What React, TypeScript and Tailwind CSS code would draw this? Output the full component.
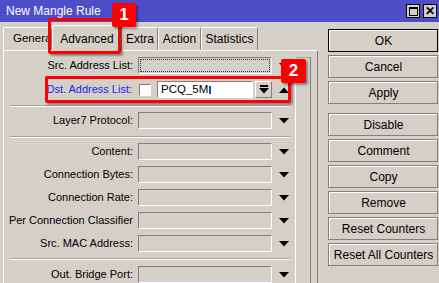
import React from "react";

const Down = ({ className = "" }: { className?: string }) => (
  <svg width="10" height="6" viewBox="0 0 10 6" className={className}>
    <polygon points="0,0 10,0 5,5.5" fill="#000" />
  </svg>
);

const Up = () => (
  <svg width="10" height="6" viewBox="0 0 10 6">
    <polygon points="0,6 10,6 5,0.5" fill="#000" />
  </svg>
);

const Field = ({ focus = false }: { focus?: boolean }) => (
  <div className="w-[134px] h-[17px] border-t border-l border-[#808080] border-b-white border-r-white border-b border-r bg-[#d4d0c8] p-[1px]">
    {focus && <div className="w-full h-full border border-dotted border-[#333]" />}
  </div>
);

const Row = ({
  label,
  mt,
  focus = false,
}: {
  label: string;
  mt: string;
  focus?: boolean;
}) => (
  <div className={`flex items-center h-[17px] ${mt}`}>
    <div className="w-[130px] text-right pr-[1px] whitespace-nowrap">{label}</div>
    <div className="ml-[4px]">
      <Field focus={focus} />
    </div>
    <div className="w-[23px] flex justify-center">
      <Down />
    </div>
  </div>
);

const Sep = ({ mt }: { mt: string }) => (
  <div className={`ml-[6px] w-[280px] h-[2px] border-t border-[#a0a0a0] border-b border-b-white ${mt}`} />
);

const Btn = ({ label, def = false, mt = "" }: { label: string; def?: boolean; mt?: string }) => (
  <div
    className={`h-[23px] flex items-center justify-center ${mt} ${
      def ? "border border-black" : "border border-[#808080]"
    }`}
  >
    <div className="w-full h-full flex items-center justify-center border-t border-l border-white text-[12px]">
      {label}
    </div>
  </div>
);

export default function App() {
  return (
    <div className="w-[439px] h-[283px] overflow-hidden bg-[#d4d0c8] relative font-['Liberation_Sans',sans-serif] text-[11px] text-black">
      {/* title bar */}
      <div className="h-[22px] bg-[#4b4ec7] flex items-center justify-between pl-[6px] pr-[2px]">
        <span className="text-white text-[12px]">New Mangle Rule</span>
        <div className="flex gap-[3px]">
          <div className="w-[14px] h-[14px] bg-[#d4d0c8] border border-black flex items-center justify-center">
            <div className="w-[9px] h-[9px] border border-black border-t-2" />
          </div>
          <div className="w-[14px] h-[14px] bg-[#d4d0c8] border border-black flex items-center justify-center text-[12px] font-bold leading-none">
            ✕
          </div>
        </div>
      </div>

      <div className="flex">
        {/* left part */}
        <div className="ml-[3px] w-[315px] flex flex-col">
          <div className="h-[28px] flex items-end">
            <div className="w-[49px] h-[23px] border-t border-l border-white border-r border-r-[#808080] rounded-t-[2px] flex items-center pl-[9px] text-[11.5px] whitespace-nowrap">
              General
            </div>
            <div className="w-[70px] h-[26px] border-t border-l border-white border-r border-r-[#808080] rounded-t-[2px] flex items-center justify-center text-[12px] -mb-[1px] relative bg-[#d4d0c8] z-10">
              Advanced
            </div>
            <div className="w-[36px] h-[23px] border-t border-l border-white border-r border-r-[#808080] rounded-t-[2px] flex items-center justify-center text-[12px]">
              Extra
            </div>
            <div className="w-[43px] h-[23px] border-t border-l border-white border-r border-r-[#808080] rounded-t-[2px] flex items-center justify-center text-[12px]">
              Action
            </div>
            <div className="w-[57px] h-[23px] border-t border-l border-white border-r border-r-[#808080] rounded-t-[2px] flex items-center justify-center text-[12px]">
              Statistics
            </div>
          </div>
          <div className="h-[240px] border-t border-l border-white border-r border-r-[#808080] flex">
            <div className="w-[291px] flex flex-col">
              <Row label="Src. Address List:" mt="mt-[6px]" focus />
              {/* Dst row */}
              <div className="flex items-center h-[17px] mt-[7px]">
                <div className="w-[130px] text-right pr-[1px] whitespace-nowrap text-[#1c1cf0]">
                  Dst. Address List:
                </div>
                <div className="ml-[6px] w-[12px] h-[12px] bg-white border-t border-l border-[#808080] border-b border-r border-b-white border-r-white" />
                <div className="ml-[6px] w-[97px] h-[17px] bg-white border-t border-l border-[#808080] border-b border-r border-b-white border-r-white flex items-center pl-[3px] text-[11.5px]">
                  <span>PCQ_5M</span>
                  <span className="ml-[1px] w-[2px] h-[8px] bg-[#1040e0]" />
                </div>
                <div className="ml-[2px] w-[17px] h-[17px] border border-[#808080] border-t-white border-l-white flex flex-col items-center justify-center">
                  <div className="w-[8px] h-[1.5px] bg-black mb-[1px]" />
                  <Down />
                </div>
                <div className="w-[23px] flex justify-center">
                  <Up />
                </div>
              </div>
              <Sep mt="mt-[7px]" />
              <Row label="Layer7 Protocol:" mt="mt-[5px]" />
              <Sep mt="mt-[7px]" />
              <Row label="Content:" mt="mt-[5px]" />
              <Row label="Connection Bytes:" mt="mt-[6px]" />
              <Row label="Connection Rate:" mt="mt-[6px]" />
              <Row label="Per Connection Classifier" mt="mt-[6px]" />
              <Row label="Src. MAC Address:" mt="mt-[6px]" />
              <Sep mt="mt-[6px]" />
              <Row label="Out. Bridge Port:" mt="mt-[6px]" />
            </div>
            {/* scrollbar */}
            <div className="w-[16px] flex flex-col pt-[6px]">
              <div className="flex-1 border-t border-[#a0a0a0] border-l border-l-white border-r border-r-[#808080]" />
            </div>
          </div>
        </div>

        {/* right buttons */}
        <div className="ml-[10px] w-[110px] pt-[7px] flex flex-col gap-[3px]">
          <Btn label="OK" def />
          <Btn label="Cancel" />
          <Btn label="Apply" />
          <Btn label="Disable" mt="mt-[6px]" />
          <Btn label="Comment" />
          <Btn label="Copy" />
          <Btn label="Remove" />
          <Btn label="Reset Counters" />
          <Btn label="Reset All Counters" />
        </div>
      </div>

      {/* annotations */}
      <div className="absolute left-[48px] top-[18px] w-[73px] h-[36px] border-[3px] border-[#f00] rounded-[2px] shadow-[2px_2px_2px_rgba(0,0,0,0.35)] z-20" />
      <div className="absolute left-[112px] top-[3px] w-[24px] h-[24px] bg-[#f00] rounded-[2px] text-white font-bold text-[17px] flex items-center justify-center shadow-[2px_2px_2px_rgba(0,0,0,0.35)] z-30">
        1
      </div>
      <div className="absolute left-[45px] top-[76px] w-[246px] h-[27px] border-[3px] border-[#f00] rounded-[2px] shadow-[2px_2px_2px_rgba(0,0,0,0.35)] z-20" />
      <div className="absolute left-[281px] top-[59px] w-[25px] h-[24px] bg-[#f00] rounded-[2px] text-white font-bold text-[17px] flex items-center justify-center shadow-[2px_2px_2px_rgba(0,0,0,0.35)] z-30">
        2
      </div>
    </div>
  );
}
